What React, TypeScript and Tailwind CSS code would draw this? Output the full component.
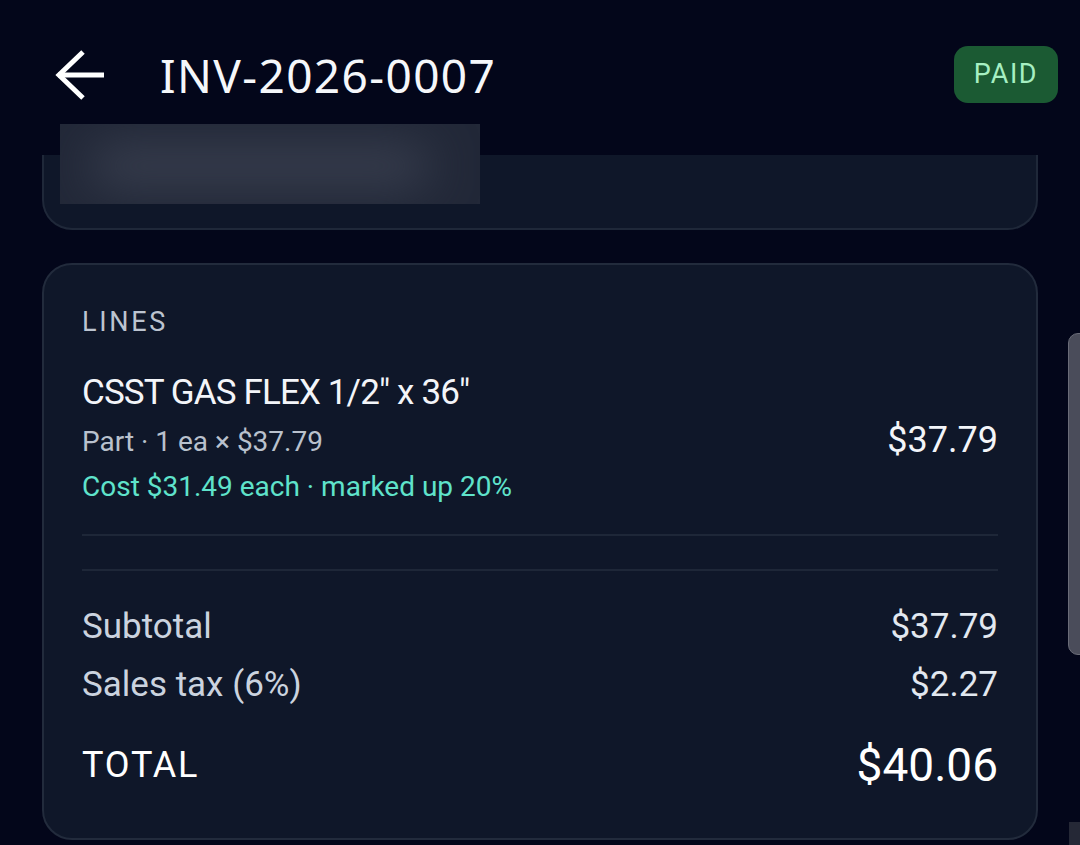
import React from "react";

function BackArrow() {
  return (
    <svg width="52" height="52" viewBox="0 0 52 52" fill="none">
      <path d="M4 26 H50" stroke="#ffffff" strokeWidth="5" />
      <path d="M29 3 L5 26 L29 49" stroke="#ffffff" strokeWidth="5" strokeLinejoin="miter" />
    </svg>
  );
}

export default function App() {
  return (
    <div
      className="relative w-[1080px] h-[845px] overflow-hidden bg-[#03061a] text-white"
      style={{ fontFamily: "Roboto, 'Noto Sans', sans-serif" }}
    >
      {/* Header */}
      <div className="h-[155px] pt-[46px] pl-[54px] pr-[22px]">
        <div className="flex items-center h-[57px]">
          <BackArrow />
          <div
            className="ml-[54px] text-[46px] leading-none tracking-[0.03em] text-[#f5f7fa]"
            style={{ fontFamily: "'Noto Sans', sans-serif" }}
          >
            INV-2026-0007
          </div>
          <div className="ml-auto h-[57px] w-[104px] rounded-[14px] bg-[#1b5a33] flex items-center justify-center">
            <span className="text-[27px] leading-none tracking-[0.06em] text-[#a6efc2]">PAID</span>
          </div>
        </div>
      </div>

      {/* Clipped previous card */}
      <div className="mx-[42px] w-[996px] h-[75px] bg-[#0f1729] border-x-2 border-b-2 border-[#1f2839] rounded-b-[30px]" />

      {/* Blurred redaction */}
      <div className="absolute left-[60px] top-[124px] w-[420px] h-[80px] bg-[#222838] overflow-hidden">
        <div className="absolute left-[30px] top-[22px] w-[340px] h-[40px] rounded-full bg-[#3a4050] blur-xl" />
      </div>

      {/* Lines card */}
      <div className="mt-[33px] mx-[42px] w-[996px] h-[577px] bg-[#0f1729] border-2 border-[#222b3c] rounded-[30px] px-[38px] pt-[44px]">
        <div className="text-[27px] leading-none tracking-[0.1em] text-[#bcc4d0]">LINES</div>

        <div className="mt-[39px] flex items-center justify-between pb-[33px] border-b-2 border-[#1e2738]">
          <div className="flex flex-col">
            <div className="text-[35px] leading-none tracking-[-0.025em] text-[#f3f5f9]">CSST GAS FLEX 1/2" x 36"</div>
            <div className="mt-[18px] text-[28px] leading-none text-[#b9c1cd]">Part · 1 ea × $37.79</div>
            <div className="mt-[17px] text-[28px] leading-none text-[#5fe3cb]">Cost $31.49 each · marked up 20%</div>
          </div>
          <div className="text-[36px] leading-none text-[#f3f5f9] mt-[4px]">$37.79</div>
        </div>

        <div className="mt-[33px] border-t-2 border-[#1e2738] pt-[38px]">
          <div className="flex justify-between text-[35px] leading-none">
            <span className="text-[#cbd3df]">Subtotal</span>
            <span className="text-[#e2e8f0]">$37.79</span>
          </div>
          <div className="mt-[23px] flex justify-between text-[35px] leading-none">
            <span className="text-[#cbd3df]">Sales tax (6%)</span>
            <span className="text-[#e2e8f0]">$2.27</span>
          </div>
          <div className="mt-[40px] flex justify-between items-center">
            <span className="text-[36px] leading-none tracking-[0.05em] text-white">TOTAL</span>
            <span className="text-[46px] leading-none text-white">$40.06</span>
          </div>
        </div>
      </div>

      {/* Scrollbar */}
      <div className="absolute left-[1068px] top-[333px] w-[14px] h-[322px] rounded-l-[10px] bg-[#4a4c5a] border border-[#6a6c78]" />
      <div className="absolute left-[1069px] top-[822px] w-[11px] h-[23px] bg-[#252836]" />
    </div>
  );
}
